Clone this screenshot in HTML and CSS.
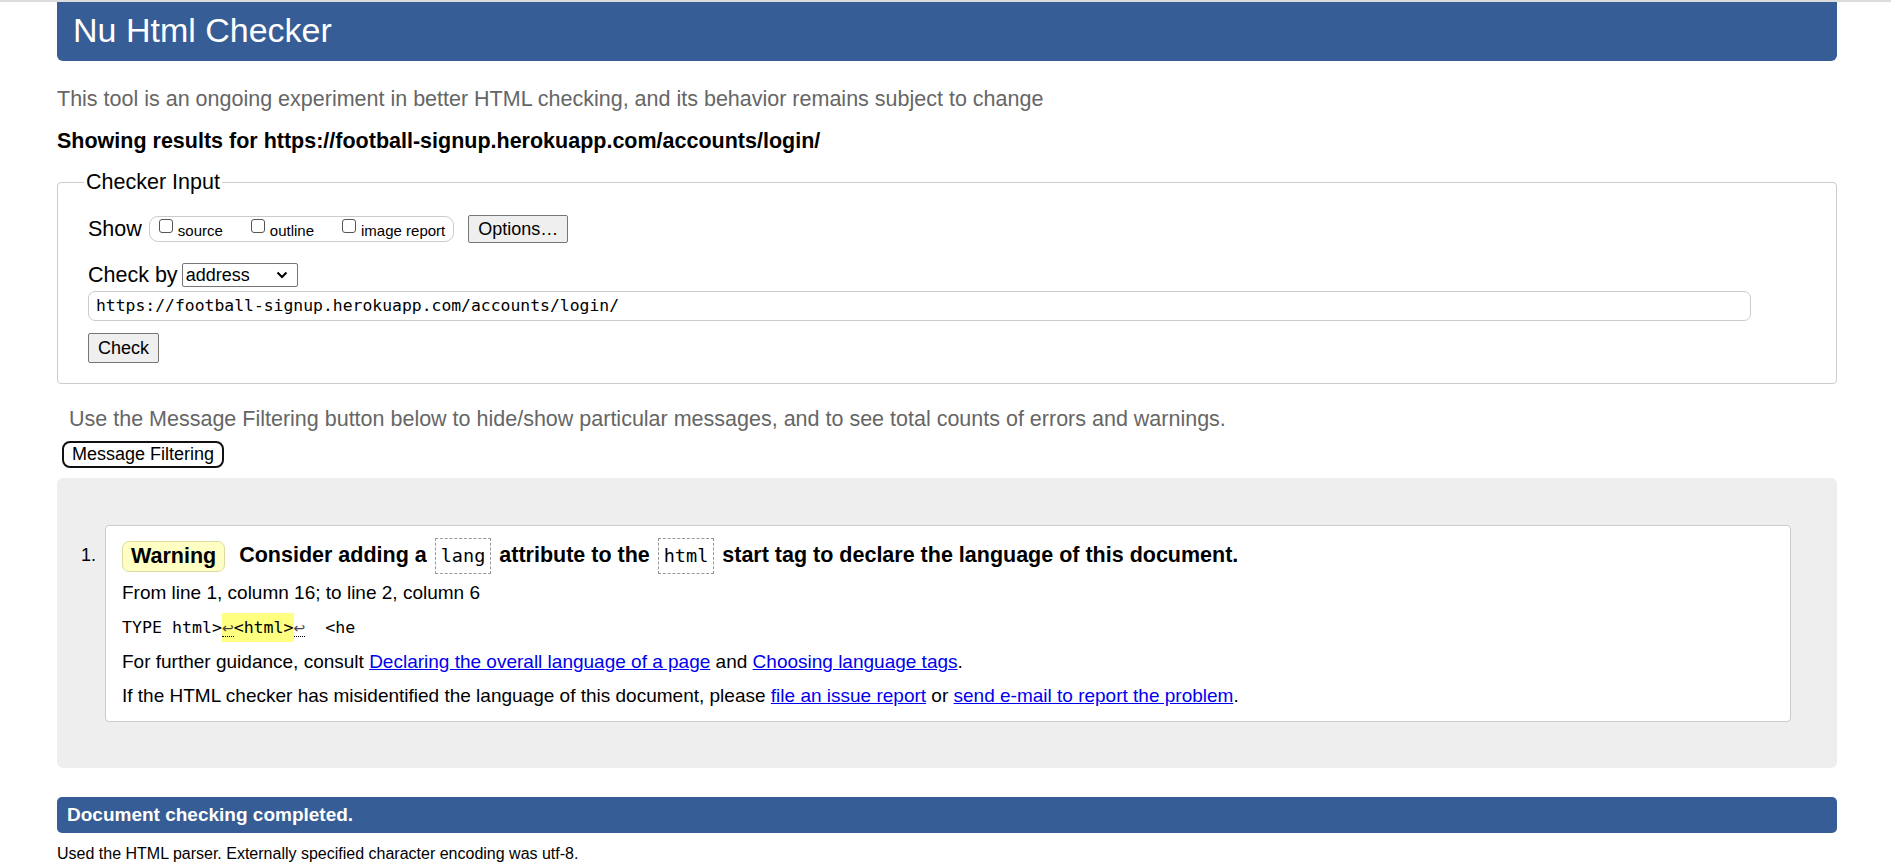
FILE: index.html
```html
<!DOCTYPE html>
<html lang="en">
<head>
<meta charset="utf-8">
<title>Nu Html Checker</title>
<link rel="stylesheet" href="styles.css">
</head>
<body>
<div class="topstrip"></div>
<div class="page">
  <h1 class="header">Nu Html Checker</h1>
  <p class="intro">This tool is an ongoing experiment in better HTML checking, and its behavior remains subject to change</p>
  <p class="showing">Showing results for https://football-signup.herokuapp.com/accounts/login/</p>

  <fieldset class="checker">
    <legend>Checker Input</legend>
    <div class="row show-row">
      <span class="lbl">Show</span>
      <span class="opts">
        <label class="opt"><span class="cb"></span>source</label>
        <label class="opt"><span class="cb"></span>outline</label>
        <label class="opt"><span class="cb"></span>image report</label>
      </span>
      <button class="btn options-btn" type="button">Options…</button>
    </div>
    <div class="row checkby-row">
      <span class="lbl">Check by</span>
      <span class="select">address
        <svg class="chev" width="12" height="8" viewBox="0 0 12 8"><path d="M1.5 1.5 L6 6 L10.5 1.5" fill="none" stroke="#000" stroke-width="2"/></svg>
      </span>
    </div>
    <div class="urlbox">https://football-signup.herokuapp.com/accounts/login/</div>
    <button class="btn check-btn" type="button">Check</button>
  </fieldset>

  <p class="filterinfo">Use the Message Filtering button below to hide/show particular messages, and to see total counts of errors and warnings.</p>
  <button class="filter-btn" type="button">Message Filtering</button>

  <div class="results">
    <ol class="messages">
      <li class="msg">
        <p class="msg-title"><span class="badge">Warning</span> <span class="msg-text">Consider adding a <code class="cbox">lang</code> attribute to the <code class="cbox">html</code> start tag to declare the language of this document.</span></p>
        <p class="loc">From line 1, column 16; to line 2, column 6</p>
        <p class="extract"><code>TYPE html&gt;<b class="hl"><span class="lf">↩</span>&lt;html&gt;</b><span class="lf">↩</span>&nbsp;&nbsp;&lt;he</code></p>
        <p class="info">For further guidance, consult <a href="#">Declaring the overall language of a page</a> and <a href="#">Choosing language tags</a>.</p>
        <p class="info">If the HTML checker has misidentified the language of this document, please <a href="#">file an issue report</a> or <a href="#">send e-mail to report the problem</a>.</p>
      </li>
    </ol>
  </div>

  <p class="done">Document checking completed.</p>
  <p class="details">Used the HTML parser. Externally specified character encoding was utf-8.</p>
</div>
</body>
</html>
```

FILE: styles.css
```css
html, body {
  margin: 0;
  padding: 0;
  background: #fff;
}
body {
  font-family: "Liberation Sans", Arial, sans-serif;
  font-size: 21.5px;
  color: #000;
}
.topstrip {
  height: 2px;
  background: #dcdcdc;
}
.page {
  padding: 0 54px 0 57px;
}
.header {
  margin: 0;
  height: 59px;
  line-height: 56px;
  padding: 0 16px;
  background: #365d95;
  color: #fff;
  font-weight: normal;
  font-size: 34px;
  border-radius: 0 0 6px 6px;
}
.intro {
  margin: 26px 0 0;
  line-height: 24px;
  color: #666;
}
.showing {
  margin: 18px 0 0;
  line-height: 24px;
  font-weight: bold;
}
.checker {
  margin: 17px 0 0;
  padding: 20px 29px 20px 30px;
  border: 1px solid #ccc;
  border-radius: 4px;
}
.checker legend {
  padding: 0 2px;
  margin-left: -4px;
  line-height: 24px;
}
.row {
  display: flex;
  align-items: center;
}
.show-row {
  height: 30px;
}
.opts {
  display: inline-flex;
  align-items: center;
  height: 24px;
  margin-left: 7px;
  padding: 0 8px 0 9px;
  border: 1px solid #ccc;
  border-radius: 9px;
  font-size: 15px;
}
.opt {
  display: inline-flex;
  align-items: center;
  margin-right: 28px;
  padding-top: 3px;
}
.opt:last-child {
  margin-right: 0;
}
.cb {
  display: inline-block;
  width: 12px;
  height: 12px;
  border: 1px solid #555;
  border-radius: 3px;
  margin: -9px 5px 0 0;
  background: #fff;
}
.btn {
  font-family: "Liberation Sans", Arial, sans-serif;
  font-size: 18px;
  background: #efefef;
  border: 1px solid #767676;
  border-radius: 2px;
  color: #000;
  padding: 0 8px;
}
.options-btn {
  margin-left: 14px;
  height: 28px;
  padding: 0 9px;
}
.checkby-row {
  margin-top: 19px;
  height: 24px;
}
.select {
  display: inline-flex;
  align-items: center;
  justify-content: space-between;
  box-sizing: border-box;
  width: 116px;
  height: 24px;
  margin-left: 4px;
  padding: 0 9px 0 3px;
  border: 1px solid #767676;
  border-radius: 2px;
  font-size: 18px;
}
.chev {
  display: block;
}
.urlbox {
  box-sizing: border-box;
  width: 1663px;
  height: 30px;
  margin-top: 4px;
  padding: 0 7px;
  line-height: 28px;
  border: 1px solid #ccc;
  border-radius: 7px;
  font-family: "DejaVu Sans Mono", monospace;
  font-size: 16.4px;
}
.check-btn {
  display: block;
  margin-top: 12px;
  height: 30px;
  padding: 0 9px;
}
.filterinfo {
  margin: 23px 0 0 12px;
  line-height: 24px;
  color: #666;
}
.filter-btn {
  display: block;
  margin: 10px 0 0 5px;
  height: 27px;
  padding: 0 8px;
  font-family: "Liberation Sans", Arial, sans-serif;
  font-size: 18px;
  background: #fff;
  border: 2px solid #111;
  border-radius: 8px;
  color: #000;
}
.results {
  margin-top: 10px;
  padding: 47px 46px 46px 48px;
  background: #eee;
  border-radius: 6px;
}
.messages {
  margin: 0;
  padding: 0;
  list-style: none;
  counter-reset: msg;
}
.msg {
  position: relative;
  counter-increment: msg;
  background: #fff;
  border: 1px solid #ccc;
  border-radius: 4px;
  padding: 13px 16px 12px 16px;
}
.msg::before {
  content: counter(msg) ".";
  position: absolute;
  left: -25px;
  top: 19px;
  font-size: 18px;
}
.msg p {
  margin: 0;
}
.msg-title {
  display: flex;
  align-items: center;
  height: 34px;
  font-weight: bold;
  font-size: 21.5px;
  white-space: nowrap;
}
.badge {
  display: inline-block;
  box-sizing: border-box;
  height: 31px;
  line-height: 29px;
  padding: 0 8px;
  background: #ffffc4;
  border: 1px solid #dcdca0;
  border-radius: 7px;
  margin-right: 14px;
}
.cbox {
  display: inline-block;
  box-sizing: border-box;
  height: 36px;
  line-height: 34px;
  padding: 0 5px;
  margin: 0 2px;
  border: 1px dashed #999;
  font-family: "DejaVu Sans Mono", monospace;
  font-weight: normal;
  font-size: 18.5px;
  vertical-align: middle;
}
.loc {
  margin-top: 7px !important;
  line-height: 26px;
  font-size: 19px;
}
.extract {
  margin-top: 7px !important;
  line-height: 26px;
}
.extract code {
  font-family: "DejaVu Sans Mono", monospace;
  font-size: 16.6px;
}
.hl {
  font-weight: normal;
  background: #ffff80;
  padding: 5px 0;
}
.lf {
  font-family: "DejaVu Sans", sans-serif;
  font-size: 14px;
  color: #444;
  border-bottom: 1px dotted #000;
}
.info {
  margin-top: 8px !important;
  line-height: 26px;
  font-size: 19px;
}
.info a {
  color: #0000ee;
}
.done {
  margin: 29px 0 0;
  height: 36px;
  line-height: 36px;
  padding: 0 10px;
  background: #365d95;
  color: #fff;
  font-weight: bold;
  font-size: 19px;
  border-radius: 5px;
}
.details {
  margin: 11px 0 0;
  font-size: 16px;
  line-height: 20px;
}
```
